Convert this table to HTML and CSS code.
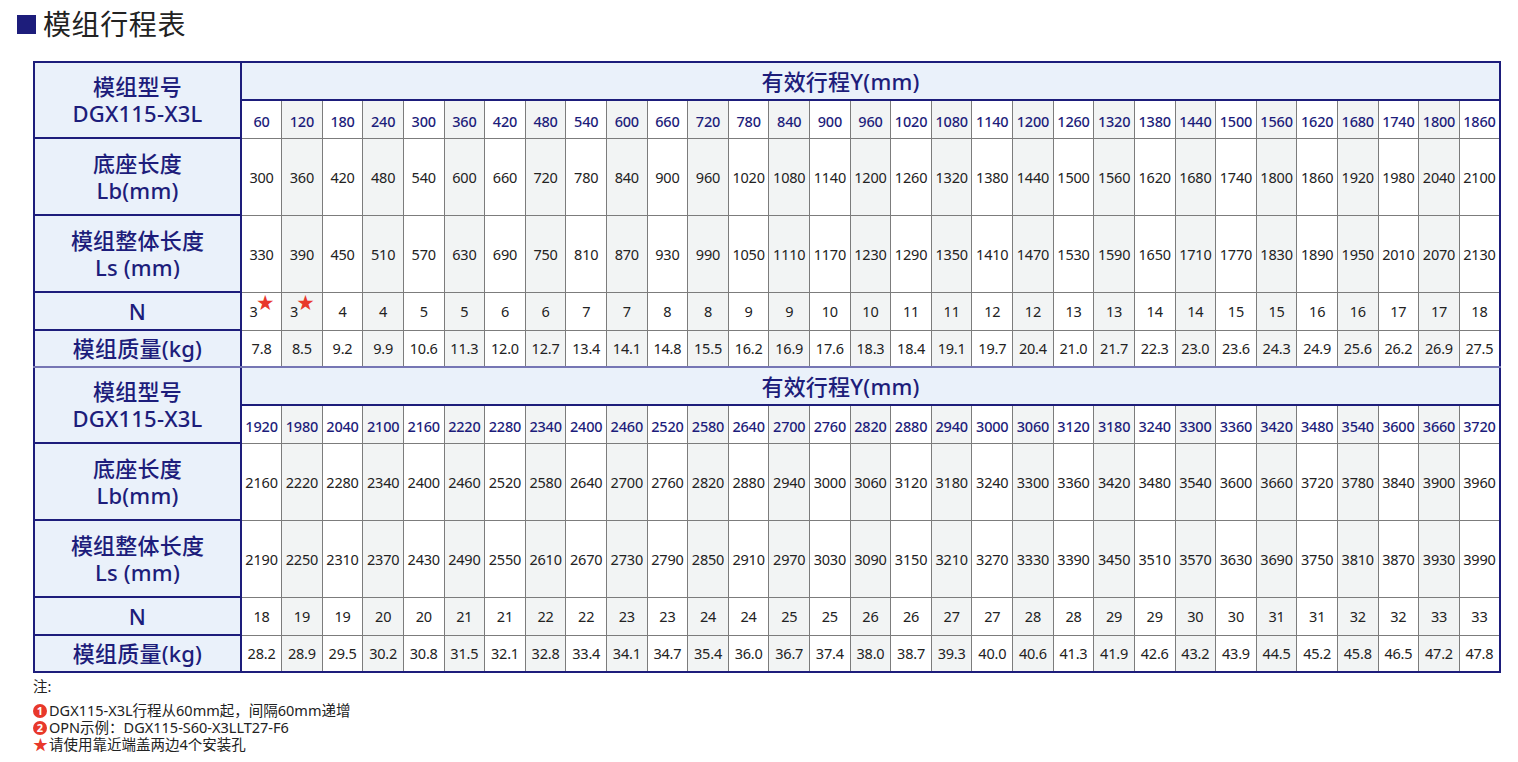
FILE: index.html
```html
<!DOCTYPE html>
<html lang="zh-CN">
<head>
<meta charset="utf-8">
<title>模组行程表</title>
<link rel="stylesheet" href="styles.css">
</head>
<body>
<div class="title"><span class="sq"></span><h1>模组行程表</h1></div>

<table class="stroke">
<colgroup>
<col class="c-lab">
<col><col class="s"><col><col class="s"><col><col class="s"><col><col class="s"><col><col class="s">
<col><col class="s"><col><col class="s"><col><col class="s"><col><col class="s"><col><col class="s">
<col><col class="s"><col><col class="s"><col><col class="s"><col><col class="s"><col><col class="s">
<col>
</colgroup>
<tbody>
<tr class="r-head"><th rowspan="2" class="lab">模组型号<br>DGX115-X3L</th><th colspan="31" class="yhead">有效行程Y(mm)</th></tr>
<tr class="r-num"><td>60</td><td>120</td><td>180</td><td>240</td><td>300</td><td>360</td><td>420</td><td>480</td><td>540</td><td>600</td><td>660</td><td>720</td><td>780</td><td>840</td><td>900</td><td>960</td><td>1020</td><td>1080</td><td>1140</td><td>1200</td><td>1260</td><td>1320</td><td>1380</td><td>1440</td><td>1500</td><td>1560</td><td>1620</td><td>1680</td><td>1740</td><td>1800</td><td>1860</td></tr>
<tr class="r-tall"><th class="lab">底座长度<br>Lb(mm)</th><td>300</td><td>360</td><td>420</td><td>480</td><td>540</td><td>600</td><td>660</td><td>720</td><td>780</td><td>840</td><td>900</td><td>960</td><td>1020</td><td>1080</td><td>1140</td><td>1200</td><td>1260</td><td>1320</td><td>1380</td><td>1440</td><td>1500</td><td>1560</td><td>1620</td><td>1680</td><td>1740</td><td>1800</td><td>1860</td><td>1920</td><td>1980</td><td>2040</td><td>2100</td></tr>
<tr class="r-tall"><th class="lab">模组整体长度<br>Ls (mm)</th><td>330</td><td>390</td><td>450</td><td>510</td><td>570</td><td>630</td><td>690</td><td>750</td><td>810</td><td>870</td><td>930</td><td>990</td><td>1050</td><td>1110</td><td>1170</td><td>1230</td><td>1290</td><td>1350</td><td>1410</td><td>1470</td><td>1530</td><td>1590</td><td>1650</td><td>1710</td><td>1770</td><td>1830</td><td>1890</td><td>1950</td><td>2010</td><td>2070</td><td>2130</td></tr>
<tr class="r-n"><th class="lab">N</th><td>3<span class="star">★</span></td><td>3<span class="star">★</span></td><td>4</td><td>4</td><td>5</td><td>5</td><td>6</td><td>6</td><td>7</td><td>7</td><td>8</td><td>8</td><td>9</td><td>9</td><td>10</td><td>10</td><td>11</td><td>11</td><td>12</td><td>12</td><td>13</td><td>13</td><td>14</td><td>14</td><td>15</td><td>15</td><td>16</td><td>16</td><td>17</td><td>17</td><td>18</td></tr>
<tr class="r-m sep"><th class="lab">模组质量(kg)</th><td>7.8</td><td>8.5</td><td>9.2</td><td>9.9</td><td>10.6</td><td>11.3</td><td>12.0</td><td>12.7</td><td>13.4</td><td>14.1</td><td>14.8</td><td>15.5</td><td>16.2</td><td>16.9</td><td>17.6</td><td>18.3</td><td>18.4</td><td>19.1</td><td>19.7</td><td>20.4</td><td>21.0</td><td>21.7</td><td>22.3</td><td>23.0</td><td>23.6</td><td>24.3</td><td>24.9</td><td>25.6</td><td>26.2</td><td>26.9</td><td>27.5</td></tr>
</tbody>
<tbody>
<tr class="r-head"><th rowspan="2" class="lab">模组型号<br>DGX115-X3L</th><th colspan="31" class="yhead">有效行程Y(mm)</th></tr>
<tr class="r-num"><td>1920</td><td>1980</td><td>2040</td><td>2100</td><td>2160</td><td>2220</td><td>2280</td><td>2340</td><td>2400</td><td>2460</td><td>2520</td><td>2580</td><td>2640</td><td>2700</td><td>2760</td><td>2820</td><td>2880</td><td>2940</td><td>3000</td><td>3060</td><td>3120</td><td>3180</td><td>3240</td><td>3300</td><td>3360</td><td>3420</td><td>3480</td><td>3540</td><td>3600</td><td>3660</td><td>3720</td></tr>
<tr class="r-tall"><th class="lab">底座长度<br>Lb(mm)</th><td>2160</td><td>2220</td><td>2280</td><td>2340</td><td>2400</td><td>2460</td><td>2520</td><td>2580</td><td>2640</td><td>2700</td><td>2760</td><td>2820</td><td>2880</td><td>2940</td><td>3000</td><td>3060</td><td>3120</td><td>3180</td><td>3240</td><td>3300</td><td>3360</td><td>3420</td><td>3480</td><td>3540</td><td>3600</td><td>3660</td><td>3720</td><td>3780</td><td>3840</td><td>3900</td><td>3960</td></tr>
<tr class="r-tall"><th class="lab">模组整体长度<br>Ls (mm)</th><td>2190</td><td>2250</td><td>2310</td><td>2370</td><td>2430</td><td>2490</td><td>2550</td><td>2610</td><td>2670</td><td>2730</td><td>2790</td><td>2850</td><td>2910</td><td>2970</td><td>3030</td><td>3090</td><td>3150</td><td>3210</td><td>3270</td><td>3330</td><td>3390</td><td>3450</td><td>3510</td><td>3570</td><td>3630</td><td>3690</td><td>3750</td><td>3810</td><td>3870</td><td>3930</td><td>3990</td></tr>
<tr class="r-n"><th class="lab">N</th><td>18</td><td>19</td><td>19</td><td>20</td><td>20</td><td>21</td><td>21</td><td>22</td><td>22</td><td>23</td><td>23</td><td>24</td><td>24</td><td>25</td><td>25</td><td>26</td><td>26</td><td>27</td><td>27</td><td>28</td><td>28</td><td>29</td><td>29</td><td>30</td><td>30</td><td>31</td><td>31</td><td>32</td><td>32</td><td>33</td><td>33</td></tr>
<tr class="r-m"><th class="lab">模组质量(kg)</th><td>28.2</td><td>28.9</td><td>29.5</td><td>30.2</td><td>30.8</td><td>31.5</td><td>32.1</td><td>32.8</td><td>33.4</td><td>34.1</td><td>34.7</td><td>35.4</td><td>36.0</td><td>36.7</td><td>37.4</td><td>38.0</td><td>38.7</td><td>39.3</td><td>40.0</td><td>40.6</td><td>41.3</td><td>41.9</td><td>42.6</td><td>43.2</td><td>43.9</td><td>44.5</td><td>45.2</td><td>45.8</td><td>46.5</td><td>47.2</td><td>47.8</td></tr>
</tbody>
</table>

<div class="notes">
  <p class="note-head">注:</p>
  <ul class="note-list">
    <li><span class="num">1</span>DGX115-X3L行程从60mm起，间隔60mm递增</li>
    <li><span class="num">2</span>OPN示例：DGX115-S60-X3LLT27-F6</li>
    <li><span class="nstar">★</span>请使用靠近端盖两边4个安装孔</li>
  </ul>
</div>
</body>
</html>
```

FILE: styles.css
```css
* { box-sizing: border-box; }
html, body { margin: 0; padding: 0; background: #fff; }
body {
  font-family: "Noto Sans", "Noto Sans CJK SC", sans-serif;
  color: #222;
}

.title {
  display: flex;
  align-items: center;
  height: 48px;
  padding-left: 17px;
  gap: 7px;
}
.title .sq {
  width: 19px;
  height: 19px;
  background: #1d1d7b;
  flex: none;
}
.title h1 {
  margin: 0;
  font-size: 28px;
  font-weight: 400;
  color: #222;
  line-height: 1;
  letter-spacing: 0.6px;
}

.stroke {
  margin: 13px 0 0 33px;
  width: 1468px;
  table-layout: fixed;
  border-collapse: collapse;
  border: 2px solid #1d1d7b;
}
.stroke col.c-lab { width: 207px; }
.stroke col.s { background: #f2f4f4; }

.stroke td {
  border: 1px solid #7c7c7c;
  padding: 0;
  text-align: center;
  vertical-align: middle;
  font-size: 14.5px;
  color: #222;
  white-space: nowrap;
  letter-spacing: -0.2px;
}
.stroke th {
  padding: 0;
  font-weight: 500;
  color: #1d1d7b;
}
.stroke th.lab {
  background: #eaf1fa;
  border: 2px solid #1d1d7b;
  font-size: 22px;
  line-height: 27px;
  letter-spacing: 0.2px;
  text-align: center;
  vertical-align: middle;
}
.stroke th.yhead {
  background: #eaf1fa;
  border-bottom: 2px solid #1d1d7b;
  border-top: 2px solid #1d1d7b;
  font-size: 22px;
  line-height: 27px;
  letter-spacing: 0.2px;
  padding-right: 60px;
}

.r-head { height: 38px; }
.r-num { height: 38px; }
.r-num td {
  color: #1d1d7b;
  font-weight: 500;
  padding-top: 4px;
}
.r-tall { height: 77px; }
.r-n { height: 38px; }
.r-m { height: 37px; }

.sep td, .sep th.lab { border-bottom: 2px solid #7676b4; }

.star {
  color: #e8382b;
  font-size: 17px;
  vertical-align: 8px;
  line-height: 0;
  margin-left: -1px;
}

.notes {
  padding: 5px 0 0 33px;
  font-size: 14.5px;
  line-height: 17px;
  color: #222;
}
.note-head { margin: 0 0 7px; }
.note-list { list-style: none; margin: 0; padding: 0; }
.note-list li { display: flex; align-items: center; height: 17px; }
.num {
  width: 14px;
  height: 14px;
  border-radius: 50%;
  background: #e8382b;
  color: #fff;
  font-size: 11px;
  font-weight: 700;
  line-height: 14px;
  text-align: center;
  margin-right: 2px;
  flex: none;
}
.nstar {
  color: #e8382b;
  font-size: 15px;
  width: 14px;
  margin-right: 2px;
  text-align: center;
}
```
